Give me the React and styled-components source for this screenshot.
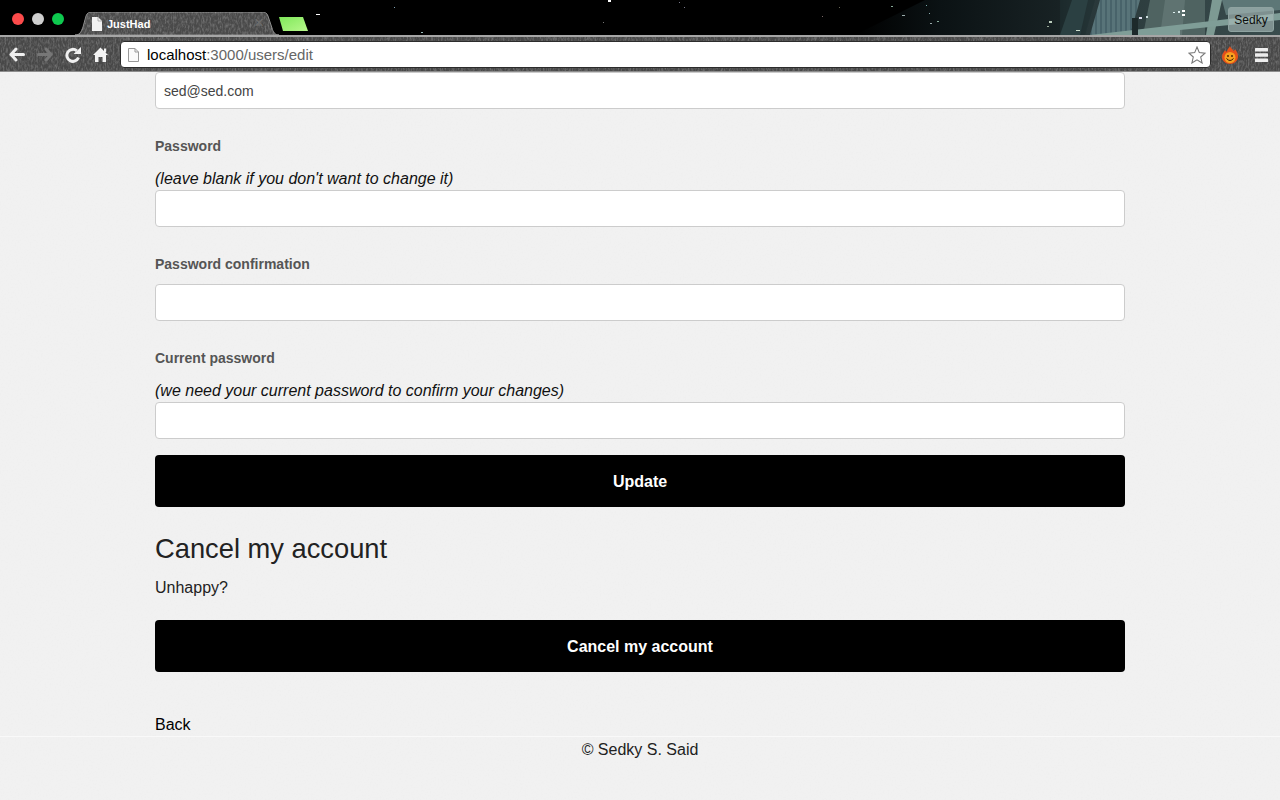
// App.jsx - account edit page inside a themed browser window

import React from 'react';
import styled, { createGlobalStyle } from 'styled-components';

const GlobalStyle = createGlobalStyle`
  html, body {
    margin: 0;
    height: 100%;
    background: #f1f1f1;
  }
  * {
    box-sizing: border-box;
  }
`;

const Browser = styled.div`
  display: flex;
  flex-direction: column;
  height: 100vh;
  overflow: hidden;
  font-family: "Liberation Sans", Arial, sans-serif;
`;

const TabStrip = styled.div`
  position: relative;
  display: flex;
  align-items: flex-end;
  height: 35px;
  flex-shrink: 0;
  background: #000;
  overflow: hidden;
`;

const ThemeArt = styled.svg`
  position: absolute;
  top: 0;
  left: 0;
`;

const Lights = styled.div`
  position: relative;
  display: flex;
  gap: 8px;
  align-self: flex-start;
  margin: 13px 0 0 12px;
`;

const Light = styled.span`
  width: 12px;
  height: 12px;
  border-radius: 50%;
  background: ${p => p.$color};
`;

const Tab = styled.div`
  position: relative;
  display: flex;
  align-items: center;
  width: 204px;
  height: 23px;
  margin-left: 11px;
  padding: 0 0 0 17px;
  color: #fff;
  font-size: 11px;
  font-weight: bold;
`;

const TabShape = styled.svg`
  position: absolute;
  top: 0;
  left: 0;
`;

const TabIcon = styled.svg`
  position: relative;
  margin-right: 5px;
`;

const TabTitle = styled.span`
  position: relative;
`;

const TabClose = styled.span`
  position: absolute;
  left: 179px;
  top: 1px;
  color: #6e6e6e;
  font-size: 17px;
  font-weight: normal;
`;

const NewTab = styled.svg`
  position: relative;
  align-self: flex-start;
  margin: 17px 0 0 -1px;
`;

const ProfileButton = styled.div`
  position: absolute;
  top: 7px;
  right: 6px;
  width: 46px;
  height: 25px;
  display: flex;
  align-items: center;
  justify-content: center;
  border: 1px solid #8fa3a1;
  border-radius: 3px;
  background: rgba(170, 188, 186, 0.62);
  color: #0c0c0c;
  font-size: 12px;
`;

const Toolbar = styled.div`
  position: relative;
  display: flex;
  align-items: center;
  height: 37px;
  flex-shrink: 0;
  padding: 1px 0 0 9px;
  background: #484848;
  border-top: 2px solid #a6a6a6;
  border-bottom: 1px solid #8d8d8d;
  overflow: hidden;
`;

const Grain = styled.svg`
  position: absolute;
  top: 0;
  left: 0;
`;

const NavButton = styled.svg`
  position: relative;
  flex-shrink: 0;
  margin-right: ${p => p.$gap}px;
`;

const Omnibox = styled.div`
  position: relative;
  display: flex;
  align-items: center;
  flex-shrink: 0;
  width: 1091px;
  height: 27px;
  padding: 0 4px 0 7px;
  background: #fff;
  border: 1px solid #2c2c2c;
  border-radius: 4px;
  font-size: 15px;
  color: #000;
`;

const PageIcon = styled.svg`
  margin-right: 8px;
  flex-shrink: 0;
`;

const UrlRest = styled.span`
  color: #666;
`;

const Star = styled.svg`
  margin-left: auto;
`;

const ToolIcon = styled.svg`
  position: relative;
  flex-shrink: 0;
  margin-left: ${p => p.$gap}px;
`;

const Page = styled.div`
  position: relative;
  flex: 1;
  min-height: 0;
  background: #f1f1f1;
`;

const Paper = styled.svg`
  position: absolute;
  top: 0;
  left: 0;
`;

const Container = styled.main`
  position: relative;
  width: 970px;
  margin: 0 auto 0 155px;
`;

const Input = styled.div`
  height: 37px;
  padding: 0 8px;
  display: flex;
  align-items: center;
  background: #fff;
  border: 1px solid #ccc;
  border-radius: 4px;
  color: #444;
  font-size: 14px;
`;

const Field = styled.div`
  margin-top: 27px;
`;

const Label = styled.div`
  height: 20px;
  margin-bottom: ${p => p.$mb}px;
  color: #555;
  font-size: 14px;
  font-weight: bold;
  line-height: 20px;
`;

const Hint = styled.div`
  height: 22px;
  color: #111;
  font-size: 16px;
  font-style: italic;
  line-height: 22px;
`;

const BlackButton = styled.div`
  display: flex;
  align-items: center;
  justify-content: center;
  height: 52px;
  margin-top: ${p => p.$mt}px;
  padding-top: 1px;
  background: #000;
  border-radius: 4px;
  color: #fff;
  font-size: 16px;
  font-weight: bold;
`;

const Heading = styled.h2`
  margin: 24px 0 0;
  color: #222;
  font-size: 27.3px;
  font-weight: normal;
  line-height: 36px;
`;

const Text = styled.p`
  margin: 10px 0 0;
  color: #222;
  font-size: 16px;
  line-height: 22px;
`;

const BackLink = styled.a`
  display: block;
  margin-top: 42px;
  color: #000;
  font-size: 16px;
  line-height: 22px;
`;

const Footer = styled.footer`
  position: relative;
  padding-top: 2px;
  border-top: 1px solid #f9f9f9;
  color: #222;
  font-size: 16px;
  line-height: 22px;
  text-align: center;
`;

const STARS = [
  [316, 14, 4, 1, '#fff'], [394, 7, 1, 1, '#7f9fb0'], [421, 32, 2, 1, '#9bb'], [608, 0, 3, 2, '#fff'],
  [679, 2, 1, 1, '#778'], [684, 7, 1, 1, '#778'], [603, 22, 1, 1, '#777'], [839, 7, 1, 1, '#665'],
  [822, 16, 1, 1, '#766'], [891, 6, 2, 1, '#8a9'], [902, 15, 3, 1, '#9aa'], [926, 5, 1, 1, '#7aa'],
  [929, 13, 1, 1, '#8aa'], [930, 23, 2, 1, '#9aa'], [937, 21, 2, 1, '#8a9'], [1049, 21, 3, 2, '#bcb'],
  [1047, 26, 2, 1, '#9a9'], [1076, 30, 4, 1, '#cdc'], [1139, 17, 3, 2, '#dde'], [1146, 16, 2, 2, '#cdd'],
  [1173, 12, 2, 1, '#dee'], [1178, 11, 2, 2, '#dee'], [1182, 10, 3, 2, '#fff'], [1182, 14, 3, 2, '#fff'],
];

function TabStripArt() {
  return (
    <ThemeArt width="1280" height="35">
      <defs>
        <linearGradient id="city" x1="0" x2="1" y1="0" y2="0">
          <stop offset="0" stopColor="#000" />
          <stop offset="0.2" stopColor="#0b1214" />
          <stop offset="0.48" stopColor="#182224" />
          <stop offset="0.55" stopColor="#29383a" />
          <stop offset="1" stopColor="#3a4d4e" />
        </linearGradient>
        <pattern id="windows" width="5" height="35" patternUnits="userSpaceOnUse">
          <rect width="5" height="35" fill="#587479" />
          <rect width="2" height="35" fill="#48636a" />
        </pattern>
      </defs>
      <polygon points="855,35 925,0 1280,0 1280,35" fill="url(#city)" />
      <polygon points="1060,35 1072,0 1088,0 1080,35" fill="#3a5557" />
      <polygon points="1090,35 1100,0 1140,0 1130,35" fill="url(#windows)" />
      <polygon points="1143,35 1150,0 1205,0 1205,35" fill="#4f6361" />
      <polygon points="1160,35 1165,0 1185,0 1182,35" fill="#5f7371" />
      <polygon points="1206,35 1212,0 1222,0 1214,35" fill="#7d9a93" />
      <polygon points="1222,0 1280,0 1280,10 1226,15" fill="#5d7777" />
      <polygon points="1090,35 1280,13 1280,20 1180,30 1180,35" fill="#7f9d97" />
      <rect x="1132" y="18" width="6" height="17" fill="#1d2a2b" />
      <polygon points="1060,0 1095,0 1085,35 1060,35" fill="#1f2f31" opacity="0.55" />
      {STARS.map(([x, y, w, h, c]) => (
        <rect key={`${x}-${y}`} x={x} y={y} width={w} height={h} fill={c} />
      ))}
    </ThemeArt>
  );
}

function Scratches({ id, width, height, seed, opacity }) {
  return (
    <>
      <filter id={id}>
        <feTurbulence type="fractalNoise" baseFrequency="0.6 0.25" numOctaves="3" seed={seed} />
        <feColorMatrix values="0 0 0 0 1  0 0 0 0 1  0 0 0 0 1  1.6 0 0 0 -0.62" />
      </filter>
      <rect width={width} height={height} filter={`url(#${id})`} opacity={opacity} />
    </>
  );
}

function PaperGrain() {
  return (
    <Paper width="1280" height="729">
      <filter id="paper">
        <feTurbulence type="fractalNoise" baseFrequency="0.6" numOctaves="2" seed="9" />
        <feColorMatrix values="0 0 0 0 0  0 0 0 0 0  0 0 0 0 0  0.3 0 0 0 -0.12" />
      </filter>
      <rect width="1280" height="729" filter="url(#paper)" opacity="0.08" />
    </Paper>
  );
}

export default function App() {
  return (
    <Browser>
      <GlobalStyle />
      <TabStrip>
        <TabStripArt />
        <Lights>
          <Light $color="#fc4b4b" />
          <Light $color="#cfcfcf" />
          <Light $color="#0ec94f" />
        </Lights>
        <Tab>
          <TabShape width="204" height="23">
            <clipPath id="tabClip">
              <path d="M0 23 C5 23 6 20 8 15 L11 4 C12 1 14 0 17 0 L187 0 C190 0 192 1 193 4 L197 16 C198 20 200 23 204 23 Z" />
            </clipPath>
            <path d="M0 23 C5 23 6 20 8 15 L11 4 C12 1 14 0 17 0 L187 0 C190 0 192 1 193 4 L197 16 C198 20 200 23 204 23 Z" fill="#4a4a4a" stroke="#8b8b8b" />
            <g clipPath="url(#tabClip)">
              <Scratches id="tabScratches" width="204" height="23" seed="11" opacity="0.3" />
            </g>
          </TabShape>
          <TabIcon width="10" height="14" viewBox="0 0 10 14">
            <path d="M0 0H6L10 4V14H0Z" fill="#f2f2f2" />
            <path d="M6 0V4H10" fill="none" stroke="#999" strokeWidth="0.7" />
          </TabIcon>
          <TabTitle>JustHad</TabTitle>
          <TabClose>×</TabClose>
        </Tab>
        <NewTab width="30" height="14" viewBox="0 0 30 14">
          <defs>
            <linearGradient id="newtab" x1="0" x2="1" y1="0" y2="1">
              <stop offset="0" stopColor="#7fe85a" />
              <stop offset="1" stopColor="#b8f88c" />
            </linearGradient>
          </defs>
          <path d="M1 0 H25 L30 14 H5 Z" fill="url(#newtab)" />
        </NewTab>
        <ProfileButton>Sedky</ProfileButton>
      </TabStrip>
      <Toolbar>
        <Grain width="1280" height="37">
          <Scratches id="scratches" width="1280" height="37" seed="4" opacity="0.3" />
        </Grain>
        <NavButton $gap={12} width="16" height="15" viewBox="0 0 16 15">
          <path d="M7 2 L2 7.500 L7 13 M3 7.500 H14.500" fill="none" stroke="#f0f0f0" strokeWidth="3" strokeLinecap="round" strokeLinejoin="round" />
        </NavButton>
        <NavButton $gap={12} width="16" height="15" viewBox="0 0 16 15">
          <path d="M9 2 L14 7.500 L9 13 M13 7.500 H1.500" fill="none" stroke="#777" strokeWidth="3" strokeLinecap="round" strokeLinejoin="round" />
        </NavButton>
        <NavButton $gap={12} width="16" height="16" viewBox="0 0 16 16">
          <path d="M13.500 10.500 A6 6 0 1 1 11.800 3.800" fill="none" stroke="#f0f0f0" strokeWidth="3" />
          <path d="M8.500 7 H16 V0 Z" fill="#f0f0f0" />
        </NavButton>
        <NavButton $gap={12} width="15" height="15" viewBox="0 0 15 15">
          <path d="M7.500 0.500 L15 8 H13 V15 H9.500 V10 H5.500 V15 H2 V8 H0 Z" fill="#f4f4f4" />
          <rect x="11" y="1.500" width="2" height="4" fill="#f4f4f4" />
        </NavButton>
        <Omnibox>
          <PageIcon width="11" height="14" viewBox="0 0 11 14">
            <path d="M0.500 0.500H7L10.500 4V13.500H0.500Z" fill="#fafafa" stroke="#999" />
            <path d="M7 0.500V4H10.500" fill="none" stroke="#999" />
          </PageIcon>
          <span>localhost<UrlRest>:3000/users/edit</UrlRest></span>
          <Star width="18" height="18" viewBox="0 0 18 18">
            <path d="M9 1 L11.300 6.600 L17 7.100 L12.700 11 L14.100 17 L9 13.800 L3.900 17 L5.300 11 L1 7.100 L6.700 6.600 Z" fill="#fff" stroke="#777" strokeWidth="1.1" />
          </Star>
        </Omnibox>
        <ToolIcon $gap={11} width="16" height="18" viewBox="0 0 16 18">
          <path d="M8 0 C9 3 11 3 11.500 5 C12.500 4.500 13 3.500 13 3 C15 5.500 16 8 16 10.500 C16 14.800 12.500 18 8 18 C3.500 18 0 14.800 0 10.500 C0 8 2 6 3 4 C3.500 5 4 5.500 5 5.500 C5 3.500 7 2 8 0 Z" fill="#e5501a" />
          <circle cx="8" cy="11.500" r="5.500" fill="#f7a11f" />
          <circle cx="6" cy="10" r="0.900" fill="#3a1d05" />
          <circle cx="10" cy="10" r="0.900" fill="#3a1d05" />
          <path d="M4.500 12.500 Q8 16.500 11.500 12.500" fill="none" stroke="#3a1d05" strokeWidth="1" />
        </ToolIcon>
        <ToolIcon $gap={17} width="13" height="14" viewBox="0 0 13 14">
          <rect y="0" width="13" height="3.500" rx="0.500" fill="#eee" />
          <rect y="5.200" width="13" height="3.500" rx="0.500" fill="#eee" />
          <rect y="10.400" width="13" height="3.500" rx="0.500" fill="#eee" />
        </ToolIcon>
      </Toolbar>
      <Page>
        <PaperGrain />
        <Container>
          <Input>sed@sed.com</Input>
          <Field>
            <Label $mb={12}>Password</Label>
            <Hint>(leave blank if you don't want to change it)</Hint>
            <Input />
          </Field>
          <Field>
            <Label $mb={10}>Password confirmation</Label>
            <Input />
          </Field>
          <Field>
            <Label $mb={12}>Current password</Label>
            <Hint>(we need your current password to confirm your changes)</Hint>
            <Input />
          </Field>
          <BlackButton $mt={16}>Update</BlackButton>
          <Heading>Cancel my account</Heading>
          <Text>Unhappy?</Text>
          <BlackButton $mt={21}>Cancel my account</BlackButton>
          <BackLink>Back</BackLink>
        </Container>
        <Footer>© Sedky S. Said</Footer>
      </Page>
    </Browser>
  );
}
